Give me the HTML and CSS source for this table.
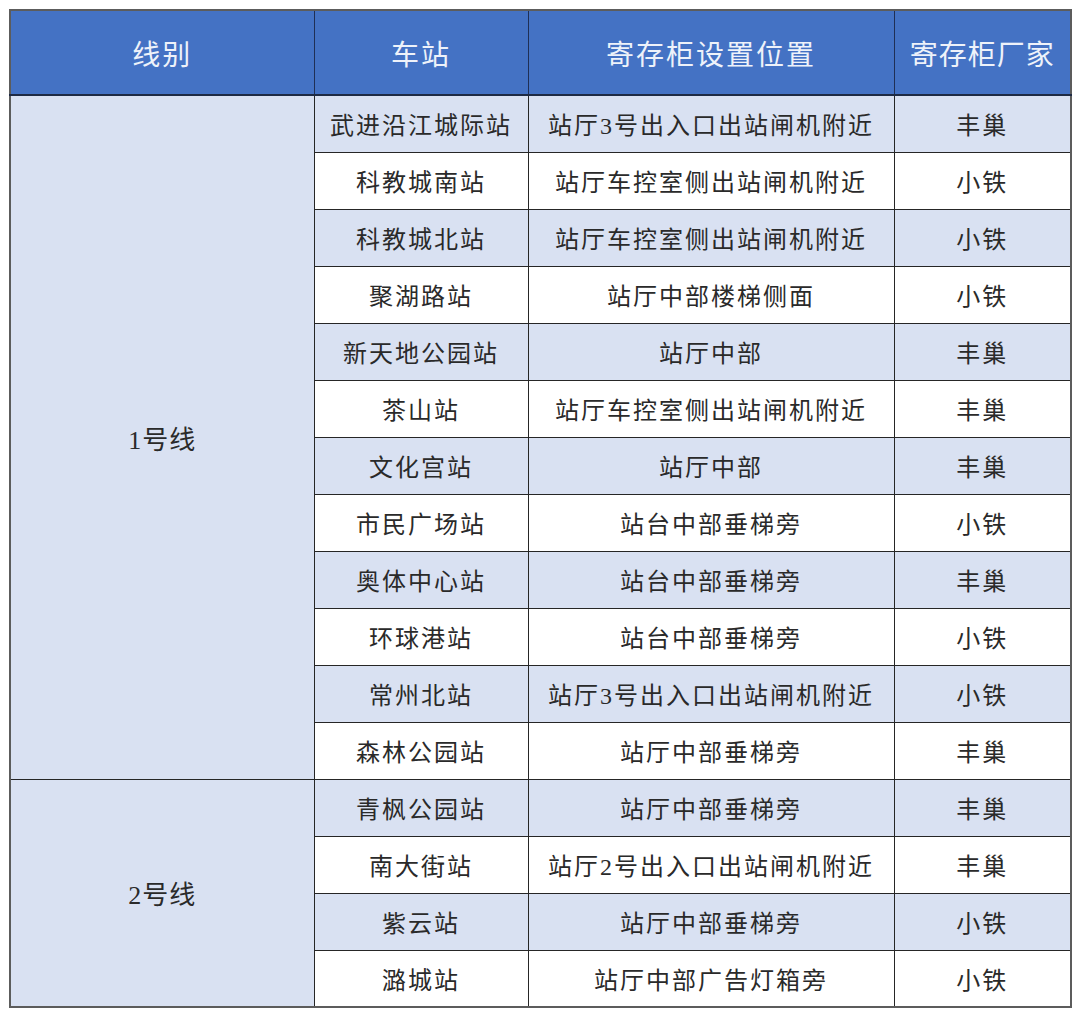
FILE: index.html
```html
<!DOCTYPE html>
<html lang="zh-CN">
<head>
<meta charset="utf-8">
<title>寄存柜</title>
<link rel="stylesheet" href="styles.css">
</head>
<body>
<table class="lockers">
  <colgroup>
    <col class="c-line">
    <col class="c-station">
    <col class="c-pos">
    <col class="c-vendor">
  </colgroup>
  <thead>
    <tr class="head">
      <th>线别</th>
      <th>车站</th>
      <th>寄存柜设置位置</th>
      <th class="tight">寄存柜厂家</th>
    </tr>
  </thead>
  <tbody>
    <tr class="alt"><td class="line" rowspan="12">1号线</td><td>武进沿江城际站</td><td>站厅3号出入口出站闸机附近</td><td>丰巢</td></tr>
    <tr><td>科教城南站</td><td>站厅车控室侧出站闸机附近</td><td>小铁</td></tr>
    <tr class="alt"><td>科教城北站</td><td>站厅车控室侧出站闸机附近</td><td>小铁</td></tr>
    <tr><td>聚湖路站</td><td>站厅中部楼梯侧面</td><td>小铁</td></tr>
    <tr class="alt"><td>新天地公园站</td><td>站厅中部</td><td>丰巢</td></tr>
    <tr><td>茶山站</td><td>站厅车控室侧出站闸机附近</td><td>丰巢</td></tr>
    <tr class="alt"><td>文化宫站</td><td>站厅中部</td><td>丰巢</td></tr>
    <tr><td>市民广场站</td><td>站台中部垂梯旁</td><td>小铁</td></tr>
    <tr class="alt"><td>奥体中心站</td><td>站台中部垂梯旁</td><td>丰巢</td></tr>
    <tr><td>环球港站</td><td>站台中部垂梯旁</td><td>小铁</td></tr>
    <tr class="alt"><td>常州北站</td><td>站厅3号出入口出站闸机附近</td><td>小铁</td></tr>
    <tr><td>森林公园站</td><td>站厅中部垂梯旁</td><td>丰巢</td></tr>
    <tr class="alt"><td class="line" rowspan="4">2号线</td><td>青枫公园站</td><td>站厅中部垂梯旁</td><td>丰巢</td></tr>
    <tr><td>南大街站</td><td>站厅2号出入口出站闸机附近</td><td>丰巢</td></tr>
    <tr class="alt"><td>紫云站</td><td>站厅中部垂梯旁</td><td>小铁</td></tr>
    <tr><td>潞城站</td><td>站厅中部广告灯箱旁</td><td>小铁</td></tr>
  </tbody>
</table>
</body>
</html>
```

FILE: styles.css
```css
html, body {
  margin: 0;
  padding: 0;
  background: #ffffff;
}

body {
  padding: 9px 0 0 9px;
  font-family: "Liberation Serif", "Noto Sans CJK SC", serif;
}

.lockers {
  border-collapse: collapse;
  table-layout: fixed;
  width: 1061px;
  border: 2px solid #5c5c5c;
}

.c-line { width: 304px; }
.c-station { width: 214px; }
.c-pos { width: 366px; }
.c-vendor { width: 177px; }

.lockers th,
.lockers td {
  padding: 0;
  text-align: center;
  vertical-align: middle;
  white-space: nowrap;
  overflow: hidden;
}

.head {
  height: 85px;
}

.lockers th {
  background: #4472c4;
  color: #eef2fa;
  font-weight: normal;
  font-size: 28px;
  letter-spacing: 2px;
  border: 1px solid #1f2f55;
  border-bottom: 2px solid #1e2a44;
}

.lockers th.tight {
  letter-spacing: 1px;
}

.lockers tbody tr {
  height: 57px;
}

.lockers td {
  font-size: 24px;
  letter-spacing: 2px;
  color: #2a2a2a;
  background: #ffffff;
  border: 1px solid #262626;
}

.lockers tr.alt td {
  background: #d9e1f2;
}

.lockers td.line,
.lockers tr.alt td.line {
  background: #d9e1f2;
  font-size: 26px;
  letter-spacing: 1px;
}
```
